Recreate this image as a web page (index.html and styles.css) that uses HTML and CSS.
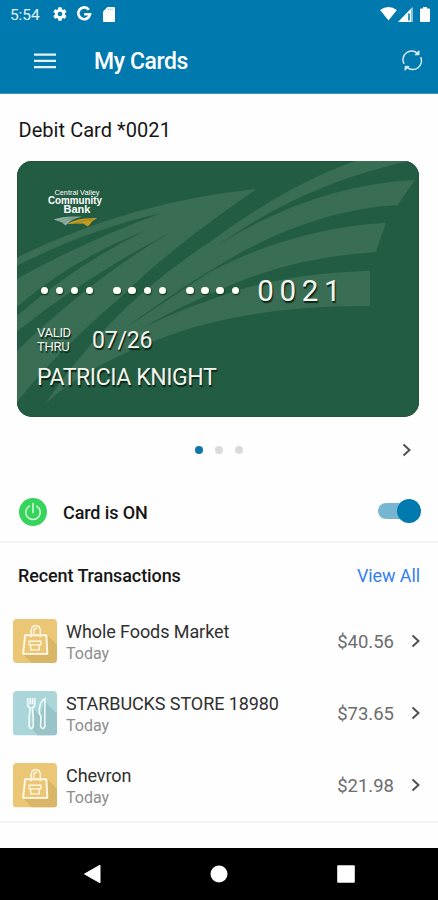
FILE: index.html
```html
<!DOCTYPE html>
<html lang="en">
<head>
<meta charset="utf-8">
<title>My Cards</title>
<link rel="stylesheet" href="styles.css">
</head>
<body>
<svg class="defs" width="0" height="0">
  <symbol id="chevron" viewBox="0 0 10 16"><path d="M1.500 2.500 7.500 8l-6 5.500" fill="none" stroke="currentColor" stroke-width="2"/></symbol>
  <symbol id="bag" viewBox="0 0 44 44">
    <rect width="44" height="44" fill="#ebc775"/>
    <path d="M34 16 44 26v18H19l-9-9h24z" fill="#d9b567"/>
    <path d="M12 16h21l1 18.500H10z" fill="none" stroke="#fff8e8" stroke-width="1.900" stroke-linejoin="round"/>
    <path d="M18 18v-5.500q0-6 4.500-6t4.500 5.500v6M20.500 15v-3.500q1-3 3.500-2.500" fill="none" stroke="#fff8e8" stroke-width="1.400"/>
    <path d="M16 22h11.500v3.500H16zM17.500 25.500v5h8.500v-5" fill="none" stroke="#fff8e8" stroke-width="1.300"/>
  </symbol>
  <symbol id="cutlery" viewBox="0 0 44 44">
    <rect width="44" height="44" fill="#aad6d9"/>
    <path d="M31 10 44 23v21H24l-6-8 3-18 6 7z" fill="#98c4c8"/>
    <path d="M14.500 7v6q0 3 2.500 3.500l-1 9v9q.4 2.500 2 2.500t2-2.500v-9l-1-9q2.500-.5 2.500-3.500V7M17 7v6M19.300 7v6" fill="none" stroke="#f4fcfc" stroke-width="1.600"/>
    <path d="M31.500 7.500v27q-.3 2.500-2 2.500t-2.300-2.500l.5-10-1.700-2q-.5-12 5.500-15z" fill="none" stroke="#f4fcfc" stroke-width="1.500"/>
  </symbol>
</svg>

<header class="top">
  <div class="status">
    <span class="clock">5:54</span>
    <svg class="gear" viewBox="0 0 24 24"><path fill="#fff" fill-rule="evenodd" d="M19.400 13a8 8 0 0 0 0-2l2.100-1.700a.5.5 0 0 0 .1-.6l-2-3.500a.5.5 0 0 0-.6-.2l-2.500 1a7 7 0 0 0-1.700-1l-.4-2.600a.5.5 0 0 0-.5-.4h-4a.5.5 0 0 0-.5.4L9 5a7 7 0 0 0-1.700 1l-2.500-1a.5.500 0 0 0-.6.2l-2 3.500a.5.5 0 0 0 .1.600L4.500 11a8 8 0 0 0 0 2l-2.200 1.700a.5.5 0 0 0-.1.600l2 3.500c.1.200.4.300.6.200l2.500-1a7 7 0 0 0 1.700 1l.4 2.600c0 .2.200.4.500.4h4c.3 0 .5-.2.500-.4l.4-2.600a7 7 0 0 0 1.700-1l2.500 1c.2.100.5 0 .6-.2l2-3.500a.5.5 0 0 0-.1-.600zM12 15.500a3.500 3.500 0 1 1 0-7 3.500 3.500 0 0 1 0 7z"/></svg>
    <svg class="google" viewBox="0 0 16 16"><path fill="none" stroke="#fff" stroke-width="2.600" d="M12.900 3.700A5.900 5.900 0 1 0 14 8.300H8.200"/></svg>
    <svg class="sd" viewBox="0 0 12 15"><path fill="#fff" d="M4.500 0H11q1 0 1 1v13q0 1-1 1H1q-1 0-1-1V4.500z"/><path d="M4.800 2.300h5" stroke="#0079af" stroke-width="1" stroke-dasharray="1.100 .8" opacity=".6"/></svg>
    <span class="spacer"></span>
    <svg class="wifi" viewBox="0 0 18 15"><path fill="#fff" d="M0 3.200Q9-3 18 3.200L9 14.500z"/></svg>
    <svg class="signal" viewBox="0 0 15 15"><path fill="#fff" d="M0 15 14.500 0v15z"/><path d="M11 6.500v7" stroke="#0079af" stroke-width="1.600"/><path d="M13.700 1v14" stroke="#8fc3dc" stroke-width="1.600"/></svg>
    <svg class="battery" viewBox="0 0 10 15"><path fill="#fff" d="M3 0h4v1.500h2q1 0 1 1V14q0 1-1 1H1q-1 0-1-1V2.500q0-1 1-1h2z"/></svg>
  </div>
  <div class="appbar">
    <svg class="menu" viewBox="0 0 22 16"><path d="M0 1.700h22M0 7.900h22M0 14.100h22" stroke="#e4f3fa" stroke-width="2.300"/></svg>
    <h1>My Cards</h1>
    <svg class="refresh" viewBox="0 0 22 22"><path d="M2.200 14.500A9 9 0 0 1 16.500 3.800M19.500 7.500A9 9 0 0 1 5.500 18.200" fill="none" stroke="#dceffa" stroke-width="1.500"/><path d="M17.800.8v4.200h-4.200zM3.200 21.300v-4.200h4.200z" fill="#dceffa" stroke="#dceffa" stroke-width="1"/></svg>
  </div>
</header>

<main>
  <h2 class="card-title">Debit Card *0021</h2>

  <section class="card">
    <svg class="pattern" viewBox="21 18 1206 768" preserveAspectRatio="none">
      <g fill="#396d54">
        <path d="M740 102Q360 140 20 308V742Q140 590 340 420Q480 280 740 102z"/>
        <path d="M105 747Q190 620 300 506Q420 380 600 260Q830 90 1036 18H1195Q920 80 700 220Q500 350 300 510Q480 360 640 260Q920 90 1215 74L1163 150Q920 165 680 300Q520 390 345 520Q480 430 600 350Q850 220 1128 203L1097 292Q850 305 640 400Q500 460 395 520Q520 460 600 435Q800 355 1080 347V453Q740 450 480 540Q230 630 105 747z"/>
      </g>
      <g fill="#225c42">
        <path d="M455 174Q230 225 20 333V372Q220 260 455 174z"/>
        <path d="M410 226Q190 310 20 456V484Q200 325 410 226z"/>
        <path d="M478 234Q220 370 20 530V588Q240 375 478 234z"/>
      </g>
    </svg>
    <div class="card-body">
      <svg class="logo" viewBox="0 0 56 42">
        <g fill="#fff" font-family="Liberation Sans, sans-serif">
          <text x="7.500" y="7.500" font-size="8" textLength="45" lengthAdjust="spacingAndGlyphs">Central Valley</text>
          <text x="1" y="16.700" font-size="10" font-weight="700" textLength="54" lengthAdjust="spacingAndGlyphs">Community</text>
          <text x="16.500" y="25.600" font-size="10.500" font-weight="700" textLength="27" lengthAdjust="spacingAndGlyphs">Bank</text>
        </g>
        <path fill="#8fb0a0" d="M6.500 32.500Q18 28.500 35 29.800 25 31.500 18.500 38.500L15 35.500z"/>
        <path fill="#c8991f" d="M20 37Q31 30 50.500 31L45.500 34 41 39.500 36 36.500z"/>
        <path stroke="#225c42" stroke-width=".3" fill="none" d="M10 34.500Q18 31 28 30.500M14 36.500Q20 32.500 30 31M27 37Q35 33 46 32"/>
      </svg>
      <div class="number">
        <span class="mask"><i></i><i></i><i></i><i></i></span>
        <span class="mask"><i></i><i></i><i></i><i></i></span>
        <span class="mask"><i></i><i></i><i></i><i></i></span>
        <span class="digits">0021</span>
      </div>
      <div class="expiry"><span class="valid">VALID<br>THRU</span><span class="date">07/26</span></div>
      <div class="holder">PATRICIA KNIGHT</div>
    </div>
  </section>

  <div class="pager">
    <span class="side"></span>
    <span class="dots"><i class="on"></i><i></i><i></i></span>
    <span class="side"><svg class="chev"><use href="#chevron"/></svg></span>
  </div>

  <section class="power">
    <svg class="power-icon" viewBox="0 0 28 28"><circle cx="14" cy="14" r="14" fill="#37d45c"/><path d="M10.300 8.100a7.200 7.200 0 1 0 7.400 0M14 5.500v9" fill="none" stroke="#dcfbe2" stroke-width="1.500" stroke-linecap="round"/></svg>
    <span class="power-label">Card is ON</span>
    <span class="switch"><i></i></span>
  </section>

  <section class="recent">
    <div class="recent-head"><h3>Recent Transactions</h3><a>View All</a></div>
    <div class="tx"><svg class="cat"><use href="#bag"/></svg><div class="who"><b>Whole Foods Market</b><small>Today</small></div><span class="amount">$40.56</span><svg class="chev"><use href="#chevron"/></svg></div>
    <div class="tx"><svg class="cat"><use href="#cutlery"/></svg><div class="who"><b>STARBUCKS STORE 18980</b><small>Today</small></div><span class="amount">$73.65</span><svg class="chev"><use href="#chevron"/></svg></div>
    <div class="tx"><svg class="cat"><use href="#bag"/></svg><div class="who"><b>Chevron</b><small>Today</small></div><span class="amount">$21.98</span><svg class="chev"><use href="#chevron"/></svg></div>
  </section>
</main>

<nav class="navbar">
  <svg viewBox="0 0 18 20"><path d="M1.500 10 17 1.200v17.600z" fill="#fff" stroke="#fff" stroke-linejoin="round"/></svg>
  <svg viewBox="0 0 18 20"><circle cx="9" cy="10" r="8.500" fill="#fff"/></svg>
  <svg viewBox="0 0 18 20"><rect x=".2" y="1.200" width="17.600" height="17.600" rx="1" fill="#fff"/></svg>
</nav>
</body>
</html>
```
FILE: styles.css
```css
* { box-sizing: border-box; }
body {
  margin: 0;
  width: 438px;
  height: 900px;
  overflow: hidden;
  display: flex;
  flex-direction: column;
  background: #fefefe;
  color: #161616;
  font-family: Roboto, "Liberation Sans", sans-serif;
}
svg { display: block; flex: none; }
h1, h2, h3 { margin: 0; }
.defs { position: absolute; }
.top { height: 94px; background: #0079af; color: #fff; border-bottom: 1px solid #3b93bd; }
.status { height: 28px; padding: 0 8px 0 10px; display: flex; align-items: center; }
.clock { width: 42px; padding-top: 1px; font-size: 15.5px; letter-spacing: -0.1px; color: #e4f3fa; }
.gear { width: 16px; height: 16px; }
.google { width: 16px; height: 16px; margin-left: 8px; }
.sd { width: 12px; height: 15px; margin-left: 11px; }
.spacer { flex: 1; }
.wifi { width: 17px; height: 14px; }
.signal { width: 15px; height: 15px; margin-left: 1px; }
.battery { width: 10px; height: 15px; margin-left: 7px; }
.appbar { height: 65px; padding: 0 15px 0 34px; display: flex; align-items: center; }
.menu { width: 22px; height: 16px; }
h1 { flex: 1; margin-left: 38px; padding-top: 2px; font-size: 23px; font-weight: 500; letter-spacing: -0.4px; }
.refresh { width: 21px; height: 21px; }

main { flex: 1; }
.card-title { height: 67px; padding: 0 18.500px; line-height: 72px; font-size: 20px; font-weight: 400; letter-spacing: 0.05px; }
.card { position: relative; width: 402px; height: 256px; margin-left: 17px; border-radius: 15px; overflow: hidden; background: #225c42; box-shadow: inset 0 0 0 1px #24533a; }
.pattern { position: absolute; inset: 0; width: 402px; height: 256px; }
.card-body { position: relative; padding: 26px 20px 0; color: #f4f5ee; text-shadow: 1px 1.5px 1px #0a2418; }
.logo { width: 56px; height: 42px; margin-left: 10px; overflow: visible; text-shadow: none; }
.number { display: flex; align-items: center; height: 35px; margin-top: 44px; margin-left: 3.500px; }
.mask { display: flex; gap: 7.5px; margin-right: 20px; }
.mask i { width: 7.6px; height: 7.6px; border-radius: 50%; background: #fffff8; box-shadow: 0.5px 1px 1.500px #0a2418; }
.digits { padding-top: 1px; font-size: 29.500px; letter-spacing: 5.700px; margin-left: -2px; }
.expiry { display: flex; align-items: center; height: 30px; margin-top: 16px; padding-top: 2px; }
.valid { width: 55px; font-size: 13px; line-height: 14px; letter-spacing: -0.3px; }
.date { padding-top: 1px; font-size: 23px; letter-spacing: -0.2px; }
.holder { margin-top: 10px; line-height: 28px; font-size: 23px; letter-spacing: -0.4px; white-space: nowrap; }

.pager { height: 65px; padding: 0 26px; display: flex; align-items: center; }
.side { flex: 1; display: flex; justify-content: flex-end; }
.dots { display: flex; gap: 12px; }
.dots i { width: 8px; height: 8px; border-radius: 50%; background: #dadada; }
.dots .on { background: #0e76ac; }
.chev { width: 10px; height: 16px; color: #505050; }
.power { height: 61px; padding: 0 17px 0 19px; display: flex; align-items: center; border-bottom: 2px solid #f4f4f4; }
.power-icon { width: 28px; height: 28px; }
.power-label { flex: 1; margin-left: 16px; padding-top: 2px; font-size: 18px; font-weight: 500; letter-spacing: -0.1px; }
.switch { position: relative; width: 43px; height: 24px; margin-bottom: 1px; display: flex; align-items: center; justify-content: flex-end; }
.switch::before { content: ""; position: absolute; left: 0; top: 4px; width: 34px; height: 16px; border-radius: 8px; background: #76b6d2; }
.switch i { position: relative; width: 24px; height: 24px; border-radius: 50%; background: #0079af; }
.recent { height: 280px; border-bottom: 2px solid #f4f4f4; }
.recent-head { height: 62px; padding: 2px 18px 0; display: flex; align-items: center; justify-content: space-between; }
h3 { font-size: 18px; font-weight: 500; letter-spacing: -0.1px; }
.recent-head a { font-size: 18px; letter-spacing: -0.1px; color: #357ef0; }
.tx { height: 72.200px; padding: 0 17px 0 12.500px; display: flex; align-items: center; }
.cat { width: 44.500px; height: 44.500px; border-radius: 4px; }
.who { flex: 1; margin-left: 9px; padding-top: 2px; display: flex; flex-direction: column; }
.who b { font-size: 18px; line-height: 23px; font-weight: 400; letter-spacing: -0.08px; color: #303030; }
.who small { font-size: 16px; line-height: 22px; color: #8d8d8d; }
.amount { margin-right: 17px; padding-top: 2px; font-size: 18.500px; color: #6d6d6d; }
.navbar { height: 52.500px; padding: 0 83px; display: flex; align-items: center; justify-content: space-between; background: #000; }
.navbar svg { width: 18px; height: 20px; }
```
